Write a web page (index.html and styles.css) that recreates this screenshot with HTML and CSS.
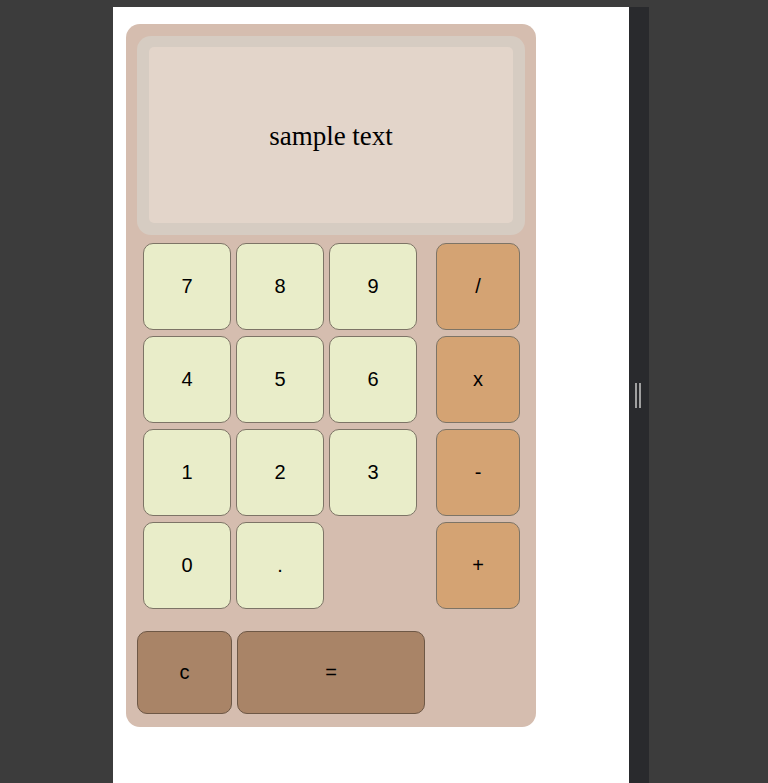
FILE: index.html
```html
<!DOCTYPE html>
<html>
<head>
<meta charset="utf-8">
<link rel="stylesheet" href="styles.css">
</head>
<body>
<div class="frame">
  <div class="gutter"></div>
  <div class="page">
    <div class="calc">
      <div class="display">
        <div class="screen">sample text</div>
      </div>
      <div class="keypad">
        <div class="digits">
          <button class="key num">7</button>
          <button class="key num">8</button>
          <button class="key num">9</button>
          <button class="key num">4</button>
          <button class="key num">5</button>
          <button class="key num">6</button>
          <button class="key num">1</button>
          <button class="key num">2</button>
          <button class="key num">3</button>
          <button class="key num">0</button>
          <button class="key num">.</button>
        </div>
        <div class="ops">
          <button class="key op">/</button>
          <button class="key op">x</button>
          <button class="key op">-</button>
          <button class="key op">+</button>
        </div>
      </div>
      <div class="bottom">
        <button class="key fn clear">c</button>
        <button class="key fn equals">=</button>
      </div>
    </div>
  </div>
  <div class="divider"><span class="handle"></span></div>
  <div class="rest"></div>
</div>
</body>
</html>
```
FILE: styles.css
```css
html, body {
  margin: 0;
  padding: 0;
  height: 100%;
  background: #3c3c3c;
  overflow: hidden;
}
.frame {
  display: flex;
  height: 783px;
  padding-top: 7px;
  box-sizing: border-box;
}
.gutter {
  width: 113px;
  flex: none;
}
.page {
  width: 516px;
  flex: none;
  background: #ffffff;
  padding: 17px 0 0 13px;
  box-sizing: border-box;
}
.divider {
  width: 20px;
  flex: none;
  background: #292a2d;
  display: flex;
  align-items: center;
  justify-content: center;
}
.handle {
  width: 2px;
  height: 25px;
  border-left: 2px solid #a0a0a0;
  border-right: 2px solid #a0a0a0;
  margin-left: -2px;
}
.rest {
  flex: 1;
}
.calc {
  width: 410px;
  height: 703px;
  box-sizing: border-box;
  background: #d5bdaf;
  border-radius: 14px;
  padding: 12px 11px 13px 11px;
}
.display {
  height: 199px;
  box-sizing: border-box;
  background: #d6ccc2;
  border-radius: 14px;
  padding: 11px 12px 12px 12px;
}
.screen {
  height: 100%;
  box-sizing: border-box;
  padding-top: 3px;
  background: #e3d5ca;
  border-radius: 5px;
  display: flex;
  align-items: center;
  justify-content: center;
  font-family: "Liberation Serif", "Times New Roman", serif;
  font-size: 27px;
  color: #000;
}
.keypad {
  display: flex;
  gap: 19px;
  margin-top: 8px;
  padding-left: 6px;
}
.digits {
  display: grid;
  grid-template-columns: repeat(3, 88px);
  grid-auto-rows: 87px;
  gap: 6px 5px;
}
.ops {
  display: grid;
  grid-template-columns: 84px;
  grid-auto-rows: 87px;
  gap: 6px;
}
.key {
  margin: 0;
  padding: 0;
  border: 1px solid #7d7466;
  border-radius: 10px;
  font-family: "Liberation Sans", Arial, sans-serif;
  font-size: 20px;
  color: #000;
  box-sizing: border-box;
}
.num {
  background: #e9edc9;
}
.op {
  background: #d4a373;
}
.fn {
  background: #a98467;
  border-color: #6e5846;
}
.bottom {
  display: flex;
  gap: 5px;
  margin-top: 22px;
}
.clear {
  width: 95px;
  height: 83px;
}
.equals {
  width: 188px;
  height: 83px;
}
```
